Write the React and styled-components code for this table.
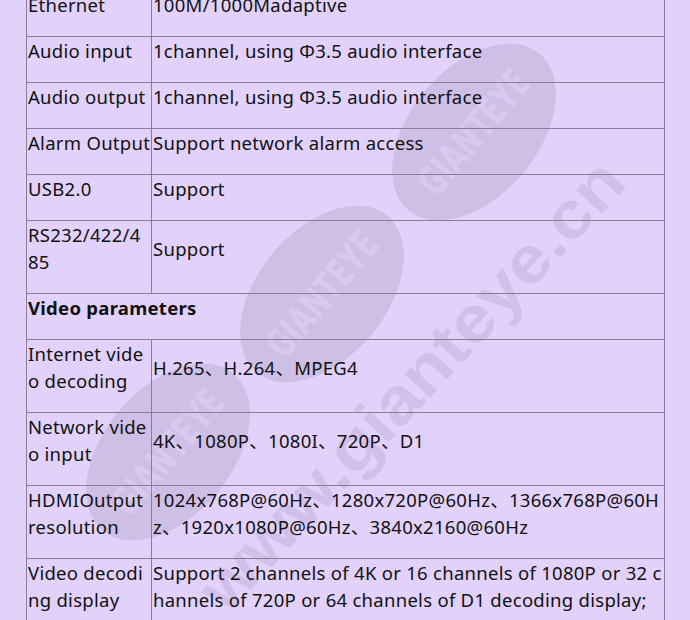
import React from 'react';
import styled, { createGlobalStyle } from 'styled-components';

const GlobalStyle = createGlobalStyle`
  html, body {
    margin: 0;
    padding: 0;
    background: #e1d1fb;
  }
`;

const Page = styled.div`
  position: relative;
  width: 690px;
  height: 620px;
  overflow: hidden;
  padding: 0 25px 0 26px;
  box-sizing: border-box;
  background: #e1d1fb;
  font-family: "Noto Sans", "Noto Sans CJK SC", sans-serif;
  color: #111;
`;

const Watermark = styled.svg`
  position: absolute;
  left: 0;
  top: 0;
  width: 690px;
  height: 620px;
  pointer-events: none;
  z-index: 0;
`;

const SpecTable = styled.table`
  position: relative;
  z-index: 1;
  width: 639px;
  margin-top: -10px;
  border-collapse: collapse;
  table-layout: fixed;
  font-size: 18.5px;
  line-height: 27px;
  letter-spacing: 0.28px;
`;

const Cell = styled.td`
  border: 1px solid #8b7c99;
  padding: 0 0 18px 1px;
  vertical-align: middle;
  word-break: break-all;
  font-weight: ${(p) => (p.$heading ? 700 : 400)};
`;

const rows = [
  ['Ethernet', '100M/1000Madaptive'],
  ['Audio input', '1channel, using Φ3.5 audio interface'],
  ['Audio output', '1channel, using Φ3.5 audio interface'],
  ['Alarm Output', 'Support network alarm access'],
  ['USB2.0', 'Support'],
  ['RS232/422/485', 'Support'],
  ['Video parameters'],
  ['Internet video decoding', 'H.265、H.264、MPEG4'],
  ['Network video input', '4K、1080P、1080I、720P、D1'],
  ['HDMIOutput resolution', '1024x768P@60Hz、1280x720P@60Hz、1366x768P@60Hz、1920x1080P@60Hz、3840x2160@60Hz'],
  ['Video decoding display', 'Support 2 channels of 4K or 16 channels of 1080P or 32 channels of 720P or 64 channels of D1 decoding display;'],
];

const badges = [
  { cx: 474, cy: 132 },
  { cx: 322, cy: 294 },
  { cx: 168, cy: 452 },
];

function Badge({ cx, cy }) {
  return (
    <g transform={`translate(${cx} ${cy}) rotate(-50)`}>
      <ellipse rx="102" ry="64" fill="#b9a8cf" fillOpacity="0.45" />
      <text
        x="0"
        y="14"
        textAnchor="middle"
        fontFamily='"DejaVu Sans Condensed", "Liberation Sans Narrow", sans-serif'
        fontWeight="700"
        fontSize="40"
        textLength="150"
        lengthAdjust="spacingAndGlyphs"
        fill="#e3d6f7"
        fillOpacity="0.5"
      >
        GIANTEYE
      </text>
    </g>
  );
}

export default function App() {
  return (
    <>
      <GlobalStyle />
      <Page>
        <Watermark viewBox="0 0 690 620">
          {badges.map((b, i) => (
            <Badge key={i} {...b} />
          ))}
          <text
            transform="translate(410 384) rotate(-47)"
            textAnchor="middle"
            y="24"
            fontFamily='"Liberation Sans", Arial, sans-serif'
            fontWeight="700"
            fontSize="66"
            textLength="590"
            lengthAdjust="spacingAndGlyphs"
            fill="#b9a8cf"
            fillOpacity="0.38"
          >
            www.gianteye.cn
          </text>
        </Watermark>
        <SpecTable>
          <colgroup>
            <col style={{ width: 125 }} />
            <col />
          </colgroup>
          <tbody>
            {rows.map(([label, value]) =>
              value === undefined ? (
                <tr key={label}>
                  <Cell colSpan={2} $heading>{label}</Cell>
                </tr>
              ) : (
                <tr key={label}>
                  <Cell>{label}</Cell>
                  <Cell>{value}</Cell>
                </tr>
              )
            )}
          </tbody>
        </SpecTable>
      </Page>
    </>
  );
}
